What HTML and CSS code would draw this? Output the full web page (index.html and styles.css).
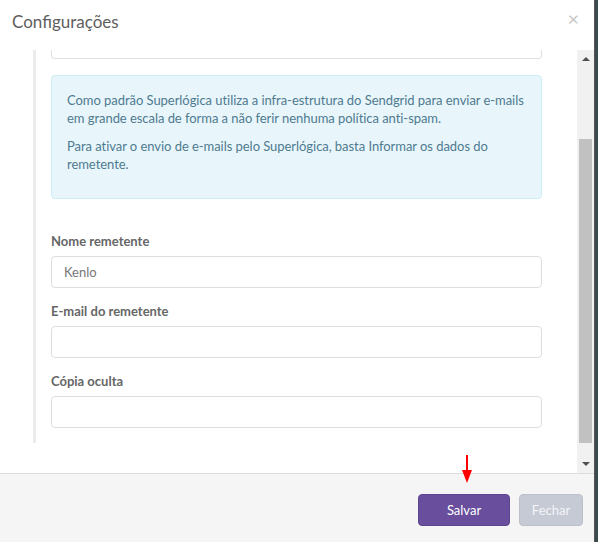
FILE: index.html
```html
<!DOCTYPE html>
<html lang="pt">
<head>
<meta charset="utf-8">
<title>Configurações</title>
<link rel="stylesheet" href="styles.css">
</head>
<body>
<div class="modal">
  <div class="modal-header">
    <h4 class="modal-title">Configurações</h4>
    <span class="close">×</span>
  </div>
  <div class="modal-body">
    <div class="scroll-content">
      <div class="section">
        <div class="cut-input"></div>
        <div class="alert">
          <p>Como padrão Superlógica utiliza a infra-estrutura do Sendgrid para enviar e-mails em grande escala de forma a não ferir nenhuma política anti-spam.</p>
          <p>Para ativar o envio de e-mails pelo Superlógica, basta Informar os dados do remetente.</p>
        </div>
        <div class="field first">
          <label class="label">Nome remetente</label>
          <div class="input">Kenlo</div>
        </div>
        <div class="field">
          <label class="label">E-mail do remetente</label>
          <div class="input"></div>
        </div>
        <div class="field">
          <label class="label">Cópia oculta</label>
          <div class="input"></div>
        </div>
      </div>
    </div>
    <div class="scrollbar">
      <span class="arrow up"></span>
      <div class="track"><div class="thumb"></div></div>
      <span class="arrow down"></span>
    </div>
  </div>
  <div class="modal-footer">
    <svg class="red-arrow" width="12" height="28" viewBox="0 0 12 28"><rect x="5" y="0" width="2" height="18" fill="#ff0000"/><polygon points="1,15 11,15 6,28" fill="#ff0000"/></svg>
    <button class="btn btn-primary">Salvar</button>
    <button class="btn btn-disabled">Fechar</button>
  </div>
</div>
</body>
</html>
```
FILE: styles.css
```css
* { box-sizing: border-box; }
html, body { margin: 0; padding: 0; }
body {
  width: 598px;
  height: 542px;
  background: #3b4a4f;
  font-family: Lato, "Open Sans", sans-serif;
  overflow: hidden;
}
.modal {
  width: 595px;
  height: 542px;
  background: #fff;
  display: flex;
  flex-direction: column;
  border-right: 1px solid #555;
}
.modal-header {
  height: 50px;
  flex: none;
  position: relative;
  padding: 11px 12px 0;
}
.modal-title {
  margin: 0;
  font-size: 17px;
  font-weight: 400;
  color: #5e5e5e;
  line-height: 22px;
}
.close {
  position: absolute;
  right: 15px;
  top: 6px;
  font-size: 20px;
  color: #c8c8c8;
  line-height: 24px;
}
.modal-body {
  height: 423px;
  flex: none;
  display: flex;
}
.scroll-content {
  flex: 1;
  padding-left: 33px;
  padding-right: 35px;
}
.section {
  border-left: 3px solid #ebebeb;
  padding-left: 15px;
  height: 393px;
}
.cut-input {
  width: 491px;
  height: 9px;
  border: 1px solid #e0e0e0;
  border-top: none;
  border-radius: 0 0 4px 4px;
}
.alert {
  width: 491px;
  margin-top: 16px;
  background: #e8f6fb;
  border: 1px solid #cdedf4;
  border-radius: 4px;
  padding: 15px 8px 15px 15px;
  color: #4f7a90;
  font-size: 13px;
  letter-spacing: -0.05px;
  line-height: 18px;
}
.alert p { margin: 0 0 10px; }
.field { width: 491px; margin-top: 15px; }
.field.first { margin-top: 34px; }
.label {
  display: block;
  font-size: 13px;
  font-weight: 700;
  color: #666;
  line-height: 17px;
  margin-bottom: 6px;
}
.input {
  height: 32px;
  border: 1px solid #dedede;
  border-radius: 4px;
  padding: 0 12px;
  font-size: 13px;
  color: #777;
  line-height: 30px;
}
.scrollbar {
  width: 17px;
  flex: none;
  background: #f1f1f1;
  display: flex;
  flex-direction: column;
  align-items: center;
}
.track {
  flex: 1;
  width: 100%;
  padding: 0 2px 8px;
  display: flex;
  flex-direction: column;
  justify-content: flex-end;
}
.thumb {
  height: 304px;
  background: #c1c1c1;
}
.arrow {
  width: 0;
  height: 0;
  border-left: 4px solid transparent;
  border-right: 4px solid transparent;
  flex: none;
}
.arrow.up {
  border-bottom: 4px solid #505050;
  margin: 7px 0 8px;
}
.arrow.down {
  border-top: 4px solid #505050;
  margin: 11px 0 7px;
}
.modal-footer {
  flex: 1;
  background: #f5f5f5;
  border-top: 1px solid #dcdcdc;
  display: flex;
  justify-content: flex-end;
  align-items: flex-start;
  padding: 20px 11px 0;
  gap: 9px;
  position: relative;
}
.red-arrow {
  position: absolute;
  left: 461px;
  top: -19px;
}
.btn {
  height: 32px;
  border-radius: 4px;
  font-family: Lato, sans-serif;
  font-size: 13px;
  padding: 0;
  cursor: pointer;
}
.btn-primary {
  width: 92px;
  background: #684e9c;
  border: 1px solid #5d4590;
  color: #fff;
}
.btn-disabled {
  width: 64px;
  background: #c6cad4;
  border: 1px solid #bcc0cb;
  color: #f3f4f7;
}
```
